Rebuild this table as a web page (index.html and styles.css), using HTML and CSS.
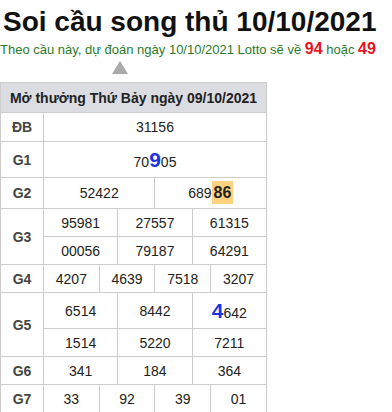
FILE: index.html
```html
<!DOCTYPE html>
<html lang="vi">
<head>
    <meta charset="UTF-8">
    <meta name="viewport" content="width=device-width, initial-scale=1.0">
    <title>Soi cầu song thủ 10/10/2021</title>
    <link rel="stylesheet" href="styles.css">
</head>
<body>
    <h1 class="title">Soi cầu song thủ 10/10/2021</h1>
    <p class="predict">Theo cầu này, dự đoán ngày 10/10/2021 Lotto sẽ về <b class="hot">94</b> hoặc <b class="hot">49</b></p>

    <div class="arrow"></div>

    <table class="result">
        <colgroup>
            <col class="col-label">
            <col span="12">
        </colgroup>
        <tr>
            <th colspan="13" class="head">Mở thưởng Thứ Bảy ngày 09/10/2021</th>
        </tr>
        <tr class="first">
            <td class="label">ĐB</td>
            <td colspan="12">31156</td>
        </tr>
        <tr class="tall">
            <td class="label">G1</td>
            <td colspan="12">70<span class="pos">9</span>05</td>
        </tr>
        <tr class="mid">
            <td class="label">G2</td>
            <td colspan="6">52422</td>
            <td colspan="6">689<span class="pair">86</span></td>
        </tr>
        <tr>
            <td class="label" rowspan="2">G3</td>
            <td colspan="4">95981</td>
            <td colspan="4">27557</td>
            <td colspan="4">61315</td>
        </tr>
        <tr>
            <td colspan="4">00056</td>
            <td colspan="4">79187</td>
            <td colspan="4">64291</td>
        </tr>
        <tr>
            <td class="label">G4</td>
            <td colspan="3">4207</td>
            <td colspan="3">4639</td>
            <td colspan="3">7518</td>
            <td colspan="3">3207</td>
        </tr>
        <tr class="tall">
            <td class="label" rowspan="2">G5</td>
            <td colspan="4">6514</td>
            <td colspan="4">8442</td>
            <td colspan="4"><span class="pos">4</span>642</td>
        </tr>
        <tr>
            <td colspan="4">1514</td>
            <td colspan="4">5220</td>
            <td colspan="4">7211</td>
        </tr>
        <tr>
            <td class="label">G6</td>
            <td colspan="4">341</td>
            <td colspan="4">184</td>
            <td colspan="4">364</td>
        </tr>
        <tr>
            <td class="label">G7</td>
            <td colspan="3">33</td>
            <td colspan="3">92</td>
            <td colspan="3">39</td>
            <td colspan="3">01</td>
        </tr>
    </table>
</body>
</html>
```

FILE: styles.css
```css
body {
    font-family: 'Liberation Sans', Arial, sans-serif;
    margin: 0;
    padding: 0;
    color: #222;
    background-color: #fff;
}

.title {
    font-size: 28px;
    font-weight: bold;
    color: #111;
    margin: 0;
    padding: 6px 0 0 3px;
    height: 32px;
    line-height: 32px;
}

.predict {
    font-size: 13px;
    color: #2b7a2b;
    margin: 3px 0 0 0;
    height: 18px;
    line-height: 18px;
}

.hot {
    color: #e8141c;
    font-size: 16px;
    line-height: 1;
}

.arrow {
    width: 0;
    height: 0;
    margin: 2px 0 8px 112px;
    border-left: 8px solid transparent;
    border-right: 8px solid transparent;
    border-bottom: 13px solid #aaa;
}

.result {
    border-collapse: collapse;
    width: 267px;
    table-layout: fixed;
}

.result .col-label {
    width: 43px;
}

.result th,
.result td {
    border: 1px solid #ccc;
    text-align: center;
    font-size: 14px;
    height: 27px;
    padding: 0;
}

.result .head {
    background-color: #dcdde3;
    font-weight: bold;
    height: 29px;
    color: #222;
}

.result .label {
    font-weight: bold;
    color: #444;
}

.result tr.first td {
    height: 28px;
}

.result tr.tall td {
    height: 35px;
}

.result tr.mid td {
    height: 30px;
}

.pos {
    color: #1a35e0;
    font-weight: bold;
    font-size: 21px;
    line-height: 1;
}

.pair {
    background-color: #ffd27f;
    font-weight: bold;
    font-size: 16px;
    padding: 3px 2px;
}
```
